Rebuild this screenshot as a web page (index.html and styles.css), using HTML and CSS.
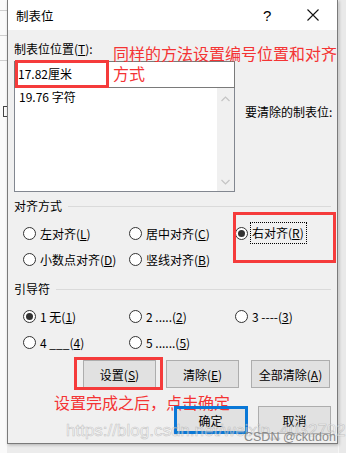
FILE: index.html
```html
<!DOCTYPE html>
<html>
  <head>
    <meta charset="utf-8">
    <link rel="stylesheet" href="styles.css">
  </head>
  <body>
    <div class="desk">
      <div class="doc">
        <div class="doc-line"></div>
        <div class="doc-line"></div>
        <div class="doc-line"></div>
        <div class="doc-mark"></div>
      </div>

      <div class="dialog">
        <div class="titlebar">
          <span class="title">制表位</span>
          <span class="help">?</span>
          <span class="close">
            <svg width="12" height="12" viewBox="0 0 12 12"><path d="M0.5 0.5 L11.5 11.5 M11.5 0.5 L0.5 11.5" stroke="#111" stroke-width="1.1" fill="none"/></svg>
          </span>
        </div>

        <div class="content">
          <div class="label">制表位位置(<u>T</u>):</div>
          <div class="pos-row">
            <div class="combo">
              <div class="combo-input">17.82厘米</div>
              <div class="combo-list">
                <div class="item">19.76 字符</div>
                <div class="scroll">
                  <svg width="9" height="6" viewBox="0 0 9 6"><path d="M0.5 5 L4.5 1 L8.5 5" stroke="#c4c4c4" stroke-width="1.2" fill="none"/></svg>
                  <svg width="9" height="6" viewBox="0 0 9 6"><path d="M0.5 1 L4.5 5 L8.5 1" stroke="#c4c4c4" stroke-width="1.2" fill="none"/></svg>
                </div>
              </div>
            </div>
            <div class="clear-label">要清除的制表位:</div>
          </div>

          <div class="group-head"><span>对齐方式</span><i></i></div>
          <div class="radios">
            <div class="radio"><b></b>左对齐(<u>L</u>)</div>
            <div class="radio"><b></b>居中对齐(<u>C</u>)</div>
            <div class="radio"><b class="on"></b><span class="focus">右对齐(<u>R</u>)</span></div>
            <div class="radio"><b></b>小数点对齐(<u>D</u>)</div>
            <div class="radio"><b></b>竖线对齐(<u>B</u>)</div>
          </div>

          <div class="group-head second"><span>引导符</span><i></i></div>
          <div class="radios">
            <div class="radio"><b class="on"></b>1 无(<u>1</u>)</div>
            <div class="radio"><b></b>2 .....(<u>2</u>)</div>
            <div class="radio"><b></b>3 ----(<u>3</u>)</div>
            <div class="radio"><b></b>4 ___(<u>4</u>)</div>
            <div class="radio"><b></b>5 ......(<u>5</u>)</div>
          </div>

          <div class="btn-row top">
            <div class="btn">设置(<u>S</u>)</div>
            <div class="btn">清除(<u>E</u>)</div>
            <div class="btn wide">全部清除(<u>A</u>)</div>
          </div>
          <div class="btn-row bottom">
            <div class="btn">确定</div>
            <div class="btn">取消</div>
          </div>
        </div>

        <!-- annotations drawn over the screenshot -->
        <div class="mark mark-input"></div>
        <div class="note note-top">同样的方法设置编号位置和对齐<br>方式</div>
        <div class="mark mark-radio"></div>
        <div class="mark mark-set"></div>
        <div class="note note-bottom">设置完成之后，点击确定</div>
        <div class="mark mark-ok"></div>
        <div class="watermark">https://blog.csdn.net/weixin_40327927</div>
        <div class="credit">CSDN @ckudon</div>
      </div>

      <div class="side"></div>
    </div>
  </body>
</html>
```

FILE: styles.css
```css
html, body {
  margin: 0;
  padding: 0;
}

body {
  width: 346px;
  height: 453px;
  overflow: hidden;
  background: #ececec;
  font-family: "Noto Sans CJK SC", "Noto Sans", sans-serif;
  font-size: 12px;
  color: #000;
}

u {
  text-decoration: underline;
  text-underline-offset: 1px;
}

.desk {
  display: flex;
  height: 453px;
}

/* word document peeking out on the left */
.doc {
  width: 7px;
  height: 453px;
  background: #fafafa;
}

.doc-line {
  height: 1px;
  background: #cfcfcf;
  margin-top: 10px;
}
.doc-line + .doc-line {
  margin-top: 24px;
}

.doc-mark {
  margin-top: 45px;
  width: 3px;
  height: 9px;
  margin-left: 3px;
  border: 1px solid #444;
  border-right: none;
}

.side {
  flex: 1;
  background: #e9e9e9;
  border-left: 1px solid #f6f6f6;
}

.dialog {
  width: 329px;
  height: 443px;
  background: #f0f0f0;
  border: 1px solid #7a7a7a;
  border-top: none;
  position: relative;
  box-shadow: 1px 1px 3px rgba(0, 0, 0, 0.25);
}

.titlebar {
  height: 30px;
  background: #fff;
  display: flex;
  align-items: center;
  padding-left: 8px;
}

.title {
  font-size: 12.5px;
  flex: 1;
}

.help {
  font-family: "Liberation Sans", sans-serif;
  font-size: 15px;
  width: 44px;
}

.close {
  width: 30px;
  display: flex;
}

.content {
  padding: 0 5px 0 6px;
}

.label {
  margin-top: 11px;
  line-height: 16px;
}

.pos-row {
  display: flex;
  margin-top: 4px;
}

.combo {
  width: 221px;
  flex: none;
}

.combo-input {
  height: 27px;
  box-sizing: border-box;
  border: 1px solid #7a7a7a;
  background: #fff;
  line-height: 24px;
  padding-left: 3px;
}

.combo-list {
  height: 104px;
  box-sizing: border-box;
  border: 1px solid #828790;
  border-top: none;
  background: #fff;
  display: flex;
}

.item {
  flex: 1;
  padding: 1px 0 0 4px;
  line-height: 16px;
}

.scroll {
  width: 17px;
  background: #f0f0f0;
  display: flex;
  flex-direction: column;
  justify-content: space-between;
  align-items: center;
  padding: 8px 0 6px;
}

.clear-label {
  margin-left: 10px;
  padding-top: 43px;
  line-height: 16px;
  white-space: nowrap;
}

.group-head {
  display: flex;
  align-items: center;
  margin-top: 6px;
  line-height: 16px;
}
.group-head.second {
  margin-top: 9px;
}
.group-head i {
  flex: 1;
  height: 1px;
  background: #dadada;
  margin-left: 6px;
  margin-right: 1px;
}

.radios {
  display: grid;
  grid-template-columns: 106px 106px 1fr;
  padding-left: 9px;
  margin-top: 6px;
}

.radio {
  height: 26px;
  display: flex;
  align-items: center;
}

.radio b {
  width: 13px;
  height: 13px;
  box-sizing: border-box;
  border: 1px solid #333;
  border-radius: 50%;
  background: #fff;
  margin-right: 4px;
  display: flex;
  align-items: center;
  justify-content: center;
}

.radio b.on::after {
  content: "";
  width: 7px;
  height: 7px;
  border-radius: 50%;
  background: #333;
}

.focus {
  border: 1px dotted #000;
  padding: 1px 2px 2px 1px;
  margin-left: -2px;
}

.btn-row {
  display: flex;
  gap: 10px;
}
.btn-row.top {
  margin-top: 5px;
  padding-left: 69px;
}
.btn-row.bottom {
  margin-top: 18px;
  padding-left: 160px;
  gap: 11px;
}
.btn-row.top .wide {
  margin-left: 2px;
}

.btn {
  width: 73px;
  height: 28px;
  box-sizing: border-box;
  border: 1px solid #adadad;
  background: #e1e1e1;
  display: flex;
  align-items: center;
  justify-content: center;
}
.btn.wide {
  width: 79px;
}

/* annotations */
.mark {
  position: absolute;
  border: 3px solid #f53b3b;
  box-sizing: border-box;
}

.mark-input {
  left: 7px;
  top: 60px;
  width: 94px;
  height: 28px;
}

.mark-radio {
  left: 225px;
  top: 212px;
  width: 103px;
  height: 51px;
}

.mark-set {
  left: 66px;
  top: 357px;
  width: 89px;
  height: 33px;
}

.mark-ok {
  left: 166px;
  top: 406px;
  width: 74px;
  height: 28px;
  border-color: #0a78d7;
}

.note {
  position: absolute;
  color: #f43434;
  font-size: 16px;
  line-height: 20px;
}

.note-top {
  left: 105px;
  top: 43px;
}

.note-bottom {
  left: 46px;
  top: 392px;
}

.watermark {
  position: absolute;
  left: 58px;
  top: 421px;
  font-family: "Liberation Sans", sans-serif;
  font-size: 17px;
  color: rgba(255, 255, 255, 0.45);
  -webkit-text-stroke: 0.6px rgba(150, 150, 150, 0.5);
  white-space: nowrap;
}

.credit {
  position: absolute;
  left: 236px;
  top: 430px;
  font-family: "Liberation Sans", sans-serif;
  font-size: 12.5px;
  color: #8a8a8a;
  white-space: nowrap;
}
```
